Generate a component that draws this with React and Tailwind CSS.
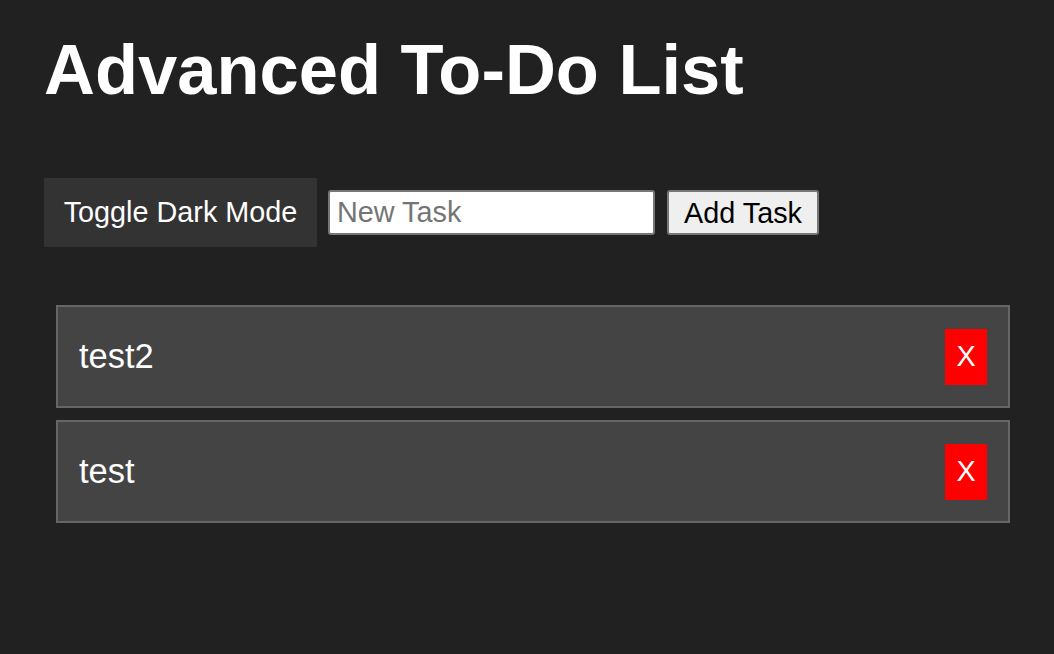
import React, { useState } from 'react';

const App = () => {
    const [tasks, setTasks] = useState(['test2', 'test']);
    const [text, setText] = useState('');

    const addTask = () => {
        if (!text.trim()) return;
        setTasks([text.trim(), ...tasks]);
        setText('');
    };

    return (
        <div className="min-h-screen bg-[#212121] text-white px-[44px] pt-[30px] font-['Liberation_Sans',Arial,sans-serif]">
            <h1 className="text-[70.5px] font-bold leading-[80px] m-0">Advanced To-Do List</h1>

            {/* Controls */}
            <div className="flex items-center mt-[68px]">
                <button className="w-[273px] h-[69px] bg-[#333333] text-white text-[28.8px] leading-[33px]">
                    Toggle Dark Mode
                </button>
                <input
                    value={text}
                    onChange={(e) => setText(e.target.value)}
                    placeholder="New Task"
                    className="ml-[11px] w-[327px] h-[45px] bg-white text-black text-[28.8px] px-[7px] border-2 border-[#767676] rounded-[3px] placeholder:text-[#757575] outline-none"
                />
                <button
                    onClick={addTask}
                    className="ml-[12px] w-[152px] h-[45px] bg-[#efefef] text-black text-[28.8px] border-2 border-[#767676] rounded-[3px]"
                >
                    Add Task
                </button>
            </div>

            {/* Task list */}
            <ul className="mt-[58px] pl-[12px] flex flex-col gap-[12px]">
                {tasks.map((task, i) => (
                    <li
                        key={i}
                        className="flex items-center justify-between h-[103px] bg-[#444444] border-2 border-[#666666] pl-[21px] pr-[21px]"
                    >
                        <span className="text-[34.5px]">{task}</span>
                        <button
                            onClick={() => setTasks(tasks.filter((_, j) => j !== i))}
                            className="w-[42px] h-[56px] bg-[#ff0000] text-white text-[28.8px] flex items-center justify-center"
                        >
                            X
                        </button>
                    </li>
                ))}
            </ul>
        </div>
    );
};

export default App;
